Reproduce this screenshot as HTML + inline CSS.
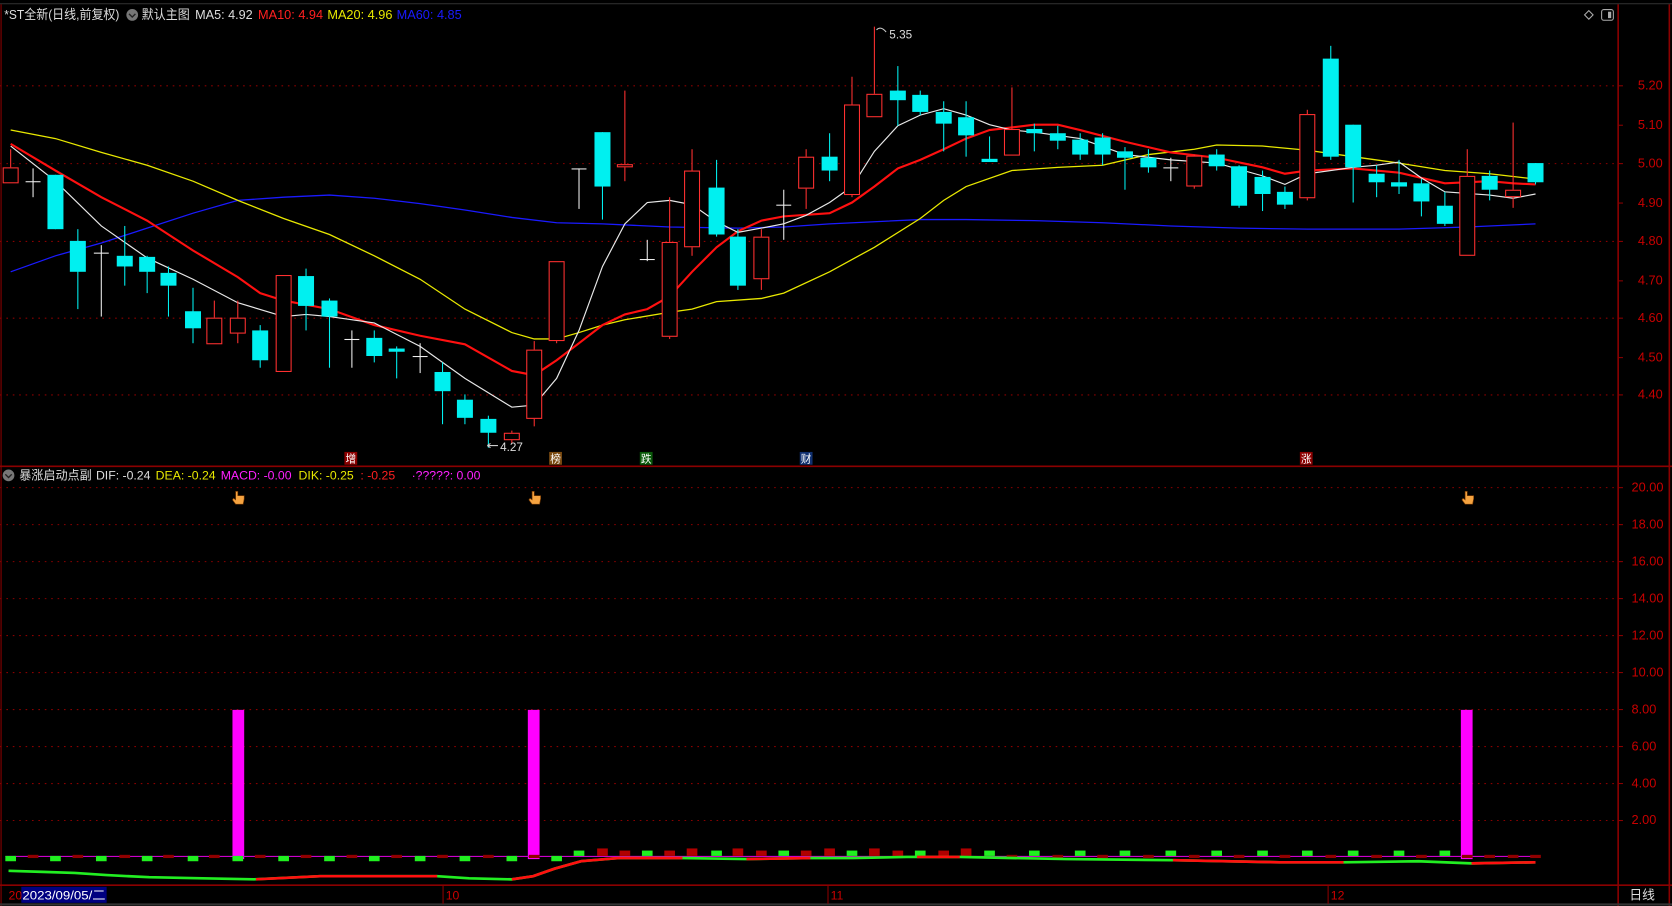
<!DOCTYPE html>
<html><head><meta charset="utf-8"><style>
html,body{margin:0;padding:0;background:#000;overflow:hidden}
svg{display:block}
text{font-family:"Liberation Sans","Noto Sans CJK SC",sans-serif}
</style></head><body>
<svg id="s" width="1672" height="906" viewBox="0 0 1568 850" preserveAspectRatio="none" xmlns="http://www.w3.org/2000/svg">
<rect width="1568" height="850" fill="#000"/>
<line x1="1517.5" y1="4" x2="1517.5" y2="850" stroke="#8b0000" stroke-width="1.5"/>
<line x1="1565.5" y1="4" x2="1565.5" y2="850" stroke="#8b0000" stroke-width="1.5"/>
<line x1="1" y1="4" x2="1" y2="850" stroke="#8b0000"/>
<line x1="0" y1="437.5" x2="1568" y2="437.5" stroke="#8b0000" stroke-width="1.5"/>
<line x1="0" y1="830.5" x2="1568" y2="830.5" stroke="#8b0000" stroke-width="1.5"/>
<line x1="0" y1="3.5" x2="1568" y2="3.5" stroke="#333" stroke-width="1"/>
<line x1="0" y1="848.5" x2="1568" y2="848.5" stroke="#333" stroke-width="2"/>
<g id="grid" stroke="#8b0000" stroke-dasharray="1.5,4.5"></g>
<g id="tk" stroke="#8b0000"></g>
<g id="lbl" fill="#c80000" font-size="12"></g>
<text x="4" y="18" font-size="12" fill="#ddd" textLength="108" lengthAdjust="spacingAndGlyphs">*ST全新(日线,前复权)</text>
<circle cx="124" cy="14" r="5.5" fill="#777"/><path d="M121 13 l3 3 l3 -3" stroke="#222" fill="none" stroke-width="1.3"/>
<text x="133" y="18" font-size="12" fill="#ddd" textLength="45" lengthAdjust="spacingAndGlyphs">默认主图</text>
<text x="183" y="18" font-size="12" fill="#ddd" textLength="54" lengthAdjust="spacingAndGlyphs">MA5: 4.92</text>
<text x="242" y="18" font-size="12" fill="#ff2020" textLength="61" lengthAdjust="spacingAndGlyphs">MA10: 4.94</text>
<text x="307" y="18" font-size="12" fill="#e8e800" textLength="61" lengthAdjust="spacingAndGlyphs">MA20: 4.96</text>
<text x="372" y="18" font-size="12" fill="#1a1aff" textLength="61" lengthAdjust="spacingAndGlyphs">MA60: 4.85</text>
<path d="M1490 10 l4 4 l-4 4 l-4 -4z" stroke="#aaa" fill="none"/>
<rect x="1502" y="9" width="11" height="10" rx="2" stroke="#aaa" fill="none"/><rect x="1508" y="11" width="3" height="6" fill="#aaa"/>
<g id="ma"></g>
<g id="cd"></g>
<text x="834" y="36" font-size="11" fill="#ddd">5.35</text>
<path d="M822 28 q4 -4 9 2" stroke="#ccc" fill="none"/>
<text x="469" y="423" font-size="11" fill="#ddd">4.27</text>
<path d="M457 418 l10 0 M457 418 l3 -2 M457 418 l3 2" stroke="#ccc" fill="none"/>
<g font-size="10" text-anchor="middle">
<rect x="323" y="424" width="12" height="12" fill="#8b0000"/><text x="329" y="434" fill="#fff">增</text>
<rect x="515" y="424" width="12" height="12" fill="#7a4a10"/><text x="521" y="434" fill="#fff">榜</text>
<rect x="600" y="424" width="12" height="12" fill="#0a5a0a"/><text x="606" y="434" fill="#fff">跌</text>
<rect x="750" y="424" width="12" height="12" fill="#103070"/><text x="756" y="434" fill="#fff">财</text>
<rect x="1219" y="424" width="12" height="12" fill="#8b0000"/><text x="1225" y="434" fill="#fff">涨</text>
</g>
<circle cx="8" cy="446" r="5.5" fill="#777"/><path d="M5 445 l3 3 l3 -3" stroke="#222" fill="none" stroke-width="1.3"/>
<g font-size="11.5">
<text x="18" y="450" fill="#ddd" textLength="68" lengthAdjust="spacingAndGlyphs">暴涨启动点副</text>
<text x="90" y="450" fill="#ddd">DIF: -0.24</text>
<text x="146" y="450" fill="#e8e800">DEA: -0.24</text>
<text x="207" y="450" fill="#ff20ff">MACD: -0.00</text>
<text x="280" y="450" fill="#e8e800">DIK: -0.25</text>
<text x="338" y="450" fill="#ff2020">: -0.25</text>
<text x="386" y="450" fill="#ff20ff">·?????: 0.00</text>
</g>
<g id="hands" fill="#f5a340" stroke="#7a3a00" stroke-width="0.6"></g>
<g fill="#ff00ff"><rect x="218" y="666" width="11" height="140"/><rect x="495" y="666" width="11" height="140"/><rect x="1370" y="666" width="11" height="140"/></g>
<line x1="5" y1="803.5" x2="1442" y2="803.5" stroke="#cc00cc" stroke-width="1"/>
<g id="hist"></g>
<polyline fill="none" stroke="#22ee22" stroke-width="2.5" points="8,817 40,818 70,819 100,821 140,823 190,824 238,825 300,822 360,822 410,822 440,824 480,825 500,822 520,815 545,808 580,805 640,805 700,806 760,805 800,805 850,804 900,804 1000,806 1100,807 1200,809 1260,809 1330,808 1380,810 1440,809"/>
<path fill="none" stroke="#ff1010" stroke-width="2.5" d="M240 825 L300 822 L410 822 M480 825 L500 822 L520 815 L545 808 L580 805 L640 805 M700 806 L760 805 M860 804 L900 804 M1100 807 L1200 809 L1260 809 M1380 810 L1440 809"/>
<text x="8" y="844" font-size="11.5" fill="#c00">20</text>
<rect x="20" y="832" width="80" height="15" fill="#000080"/>
<text x="21" y="844" font-size="11.5" fill="#fff" textLength="78" lengthAdjust="spacingAndGlyphs">2023/09/05/二</text>
<line x1="415.5" y1="831" x2="415.5" y2="848" stroke="#8b0000"/><text x="418" y="844" font-size="11.5" fill="#c00">10</text>
<line x1="776.5" y1="831" x2="776.5" y2="848" stroke="#8b0000"/><text x="779" y="844" font-size="11.5" fill="#c00">11</text>
<line x1="1245.5" y1="831" x2="1245.5" y2="848" stroke="#8b0000"/><text x="1248" y="844" font-size="11.5" fill="#c00">12</text>
<text x="1528" y="844" font-size="12" fill="#ddd">日线</text>
</svg>
<script>
var NS="http://www.w3.org/2000/svg";
function el(p,t,a,tx){var e=document.createElementNS(NS,t);for(var k in a)e.setAttribute(k,a[k]);if(tx)e.textContent=tx;document.getElementById(p).appendChild(e);return e;}
[[80,'5.20'],[117,'5.10'],[153,'5.00'],[190,'4.90'],[226,'4.80'],[263,'4.70'],[298,'4.60'],[335,'4.50'],[370,'4.40']].forEach(function(g,i){
 if(i%2==0)el('grid','line',{x1:0,x2:1517,y1:g[0]+.5,y2:g[0]+.5});
 el('tk','line',{x1:1517,x2:1522,y1:g[0]+.5,y2:g[0]+.5});
 el('lbl','text',{x:1536,y:g[0]+4},g[1]);});
for(var i=0;i<10;i++){var y=457+i*34.7;var v=(20-2*i).toFixed(2);
 el('grid','line',{x1:0,x2:1517,y1:y+.5,y2:y+.5});el('tk','line',{x1:1517,x2:1522,y1:y+.5,y2:y+.5});
 el('lbl','text',{x:1530,y:y+4},v);}
[223,501,1376].forEach(function(x){
 el('hands','path',{d:"M"+(x-2)+" 461 l0 8 l-2 -1.5 l-1 1.5 l3 4 l7 0 l1 -5 l0 -3 l-2 0 l-1 0 l-2 0 l-1 0 l0 -4 z"});});
function pl(c,w,p){el('ma','polyline',{points:p,fill:'none',stroke:c,'stroke-width':w});}
pl('#1a1aff',1.2,"10,255 52,240 95,228 138,214 181,200 223,188 266,185 309,183 351,186 394,191 436,197 480,204 522,209 565,210 628,213 692,214 735,213 778,210 820,208 863,206 906,206 970,207 1034,209 1098,212 1162,214 1226,215 1312,215 1376,213 1440,210");
pl('#e8e800',1.2,"10,122 52,130 95,143 138,155 181,170 223,188 266,205 309,220 351,240 394,262 436,290 480,312 501,318 522,318 543,312 565,305 586,300 628,293 649,290 672,283 714,280 735,275 778,255 820,232 863,205 885,188 906,175 949,160 992,157 1034,155 1077,145 1120,140 1141,136 1184,137 1226,141 1269,147 1312,153 1355,160 1397,163 1440,168");
pl('#ff1010',2,"10,135 52,160 95,185 138,207 181,235 223,260 244,275 266,282 309,290 351,305 394,315 436,323 480,348 501,352 522,338 543,322 565,305 586,295 607,290 628,278 649,255 672,232 692,217 714,207 735,203 778,200 799,190 820,175 842,158 863,150 885,140 906,130 928,122 970,117 992,117 1013,122 1055,133 1098,143 1141,148 1184,157 1205,163 1226,160 1269,158 1312,162 1355,172 1397,170 1419,172 1440,173");
pl('#e8e8e8',1.1,"10,137 52,170 95,212 138,242 181,262 223,284 266,297 287,295 309,297 351,303 394,325 436,355 480,382 501,380 522,355 543,310 565,250 586,210 607,190 628,188 649,192 672,208 692,218 714,214 735,210 756,202 778,190 799,175 820,142 842,118 863,108 885,102 906,108 928,117 949,122 970,124 1013,130 1055,145 1098,150 1141,153 1184,165 1205,173 1226,163 1248,160 1269,157 1291,155 1312,152 1333,167 1355,180 1397,183 1419,186 1440,182");
var C=[[10,'r',157,172,140,172],[31,'w',170,170,158,185],[52,'c',164,215,164,215],[73,'c',226,255,215,290],[95,'w',237,237,230,297],[117,'c',240,250,212,268],[138,'c',241,255,240,275],[158,'c',256,268,250,297],[181,'c',292,308,270,322],[201,'r',298,323,282,323],[223,'r',298,313,282,322],[244,'c',310,338,305,345],[266,'r',258,349,258,349],[287,'c',259,287,252,310],[309,'c',282,297,280,345],[330,'w',318,318,310,345],[351,'c',317,334,310,340],[372,'c',327,330,325,355],[394,'w',334,334,322,350],[415,'c',349,367,340,398],[436,'c',375,392,370,398],[458,'c',393,406,390,420],[480,'r',406,413,404,416],[501,'r',328,393,320,400],[522,'r',245,320,245,322],[543,'w',158,158,158,196],[565,'c',124,175,124,206],[586,'r',154,157,85,170],[607,'w',243,243,225,245],[628,'r',227,316,185,318],[649,'r',160,232,140,240],[672,'c',176,220,150,222],[692,'c',222,268,215,272],[714,'r',222,262,215,272],[735,'w',192,192,178,225],[756,'r',147,177,140,196],[778,'c',147,160,125,170],[799,'r',98,183,72,185],[820,'r',88,110,25,110],[842,'c',85,94,62,118],[863,'c',89,105,85,108],[885,'c',105,116,95,142],[906,'c',110,127,95,147],[928,'c',149,152,128,152],[949,'r',121,146,82,146],[970,'c',121,125,116,142],[992,'c',125,132,118,140],[1013,'c',131,145,125,150],[1034,'c',129,145,125,155],[1055,'c',142,148,138,178],[1077,'c',148,157,140,162],[1098,'w',157,157,148,170],[1120,'r',146,175,145,177],[1141,'c',145,156,140,160],[1162,'c',156,193,155,195],[1184,'c',166,182,160,198],[1205,'c',180,192,175,196],[1226,'r',107,186,103,188],[1248,'c',55,147,43,150],[1269,'c',117,157,117,190],[1291,'c',163,171,155,185],[1312,'c',171,175,150,182],[1333,'c',172,189,168,203],[1355,'c',193,210,180,212],[1376,'r',165,240,140,240],[1397,'c',165,178,160,188],[1419,'r',178,185,115,195],[1440,'c',153,171,153,173]];
C.forEach(function(c){var x=c[0],t=c[1];
 if(t=='w'){el('cd','line',{x1:x,x2:x,y1:c[4],y2:c[5],stroke:'#eee'});el('cd','line',{x1:x-7,x2:x+7,y1:c[2]+.5,y2:c[2]+.5,stroke:'#eee'});}
 else if(t=='c'){el('cd','line',{x1:x,x2:x,y1:c[4],y2:c[5],stroke:'#00f0f0'});el('cd','rect',{x:x-7.5,y:c[2],width:15,height:Math.max(2,c[3]-c[2]),fill:'#00f0f0'});}
 else{el('cd','line',{x1:x,x2:x,y1:c[4],y2:c[2],stroke:'#ff3030'});el('cd','line',{x1:x,x2:x,y1:c[3],y2:c[5],stroke:'#ff3030'});el('cd','rect',{x:x-7,y:c[2]+.5,width:14,height:Math.max(2,c[3]-c[2]-1),fill:'#000',stroke:'#ff3030'});}
});
for(var i=0;i<68;i++){var x=C[i][0];var g;
 if(i<25)g=(i%2==0);else if(i<44)g=(i%3==1);else if(i<64)g=(i%2==1);else g=false;
 var h=(i%2==0)?7:5;
 if(i>=25&&i<44&&!g){el('hist','rect',{x:x-5,y:803-h,width:10,height:h,fill:'#b00000'});}
 else if(g){el('hist','rect',{x:x-5,y:i<25?803:798,width:10,height:5,fill:'#20f020'});}
 else{el('hist','rect',{x:x-5,y:802,width:10,height:3,fill:'#900000'});}
}
</script>
</body></html>
